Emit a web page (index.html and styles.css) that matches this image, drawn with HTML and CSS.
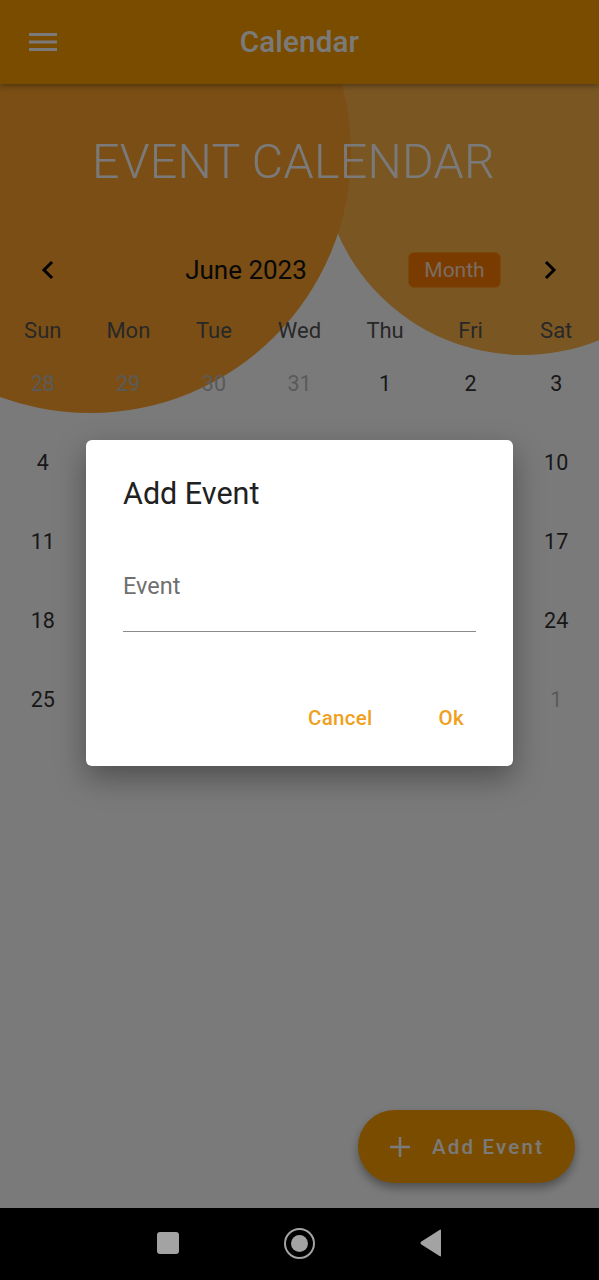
FILE: index.html
```html
<!DOCTYPE html>
<html>
<head>
<meta charset="utf-8">
<link rel="stylesheet" href="styles.css">
</head>
<body>
<div class="screen">
  <header class="appbar">
    <svg class="menu" width="28" height="20" viewBox="0 0 28 20"><rect x="0" y="1" width="28" height="3"/><rect x="0" y="8.5" width="28" height="3"/><rect x="0" y="16" width="28" height="3"/></svg>
    <div class="appbar-title">Calendar</div>
  </header>
  <main class="main">
    <div class="blob blob-right"></div>
    <div class="blob blob-left"></div>
    <h1 class="page-title">EVENT CALENDAR</h1>
    <section class="calendar">
      <div class="cal-head">
        <svg class="chev" width="24" height="24" viewBox="0 0 24 24"><path d="M15 5 L8 12 L15 19"/></svg>
        <div class="cal-month">June 2023</div>
        <div class="cal-format">Month</div>
        <svg class="chev chev-r" width="24" height="24" viewBox="0 0 24 24"><path d="M9 5 L16 12 L9 19"/></svg>
      </div>
      <div class="weekdays">
        <span>Sun</span><span>Mon</span><span>Tue</span><span>Wed</span><span>Thu</span><span>Fri</span><span>Sat</span>
      </div>
      <div class="days">
        <span class="out">28</span><span class="out">29</span><span class="out">30</span><span class="out">31</span><span>1</span><span>2</span><span>3</span>
        <span>4</span><span>5</span><span>6</span><span>7</span><span>8</span><span>9</span><span>10</span>
        <span>11</span><span>12</span><span>13</span><span>14</span><span>15</span><span>16</span><span>17</span>
        <span>18</span><span>19</span><span>20</span><span>21</span><span>22</span><span>23</span><span>24</span>
        <span>25</span><span>26</span><span>27</span><span>28</span><span>29</span><span>30</span><span class="out">1</span>
      </div>
    </section>
    <button class="fab">
      <svg width="24" height="24" viewBox="0 0 24 24"><path d="M12 2 V22 M2 12 H22"/></svg>
      <span>Add Event</span>
    </button>
    <div class="scrim"></div>
    <div class="dialog">
      <h2 class="dialog-title">Add Event</h2>
      <div class="field">
        <div class="field-label">Event</div>
      </div>
      <div class="dialog-actions">
        <button class="text-btn">Cancel</button>
        <button class="text-btn">Ok</button>
      </div>
    </div>
  </main>
  <div class="appbar-scrim"></div>
  <nav class="navbar">
    <span class="nav-square"></span>
    <span class="nav-home"><span class="nav-home-dot"></span></span>
    <svg class="nav-back" width="24" height="28" viewBox="0 0 24 28"><path d="M22 1.5 L22 26.5 Q22 28 20.5 27 L2 15.2 Q0.8 14 2 12.8 L20.5 1 Q22 0 22 1.5 Z"/></svg>
  </nav>
</div>
</body>
</html>
```
FILE: styles.css
```css
* { box-sizing: border-box; }
html, body { margin: 0; padding: 0; }
body {
  font-family: Roboto, "Liberation Sans", sans-serif;
  background: #000;
}
.screen {
  width: 599px;
  height: 1280px;
  display: flex;
  flex-direction: column;
  position: relative;
  overflow: hidden;
  background: #fff;
}
.appbar {
  height: 84px;
  flex: none;
  background: #ffa000;
  display: flex;
  align-items: center;
  justify-content: center;
  position: relative;
  z-index: 2;
  box-shadow: 0 2px 6px rgba(0,0,0,0.35);
}
.menu {
  position: absolute;
  left: 29px;
  top: 32px;
  fill: #fff;
}
.appbar-title {
  color: #fff;
  font-size: 29.5px;
  font-weight: 500;
  letter-spacing: 0.2px;
}
.main {
  flex: 1;
  position: relative;
  display: flex;
  flex-direction: column;
}
.blob {
  position: absolute;
  border-radius: 50%;
  z-index: 0;
}
.blob-left {
  width: 522px;
  height: 522px;
  left: -171px;
  top: -193px;
  background: #ffa42a;
}
.blob-right {
  width: 404px;
  height: 404px;
  left: 321px;
  top: -133px;
  background: #ffb449;
}
.page-title {
  position: relative;
  z-index: 1;
  margin: 50px 12px 0 0;
  text-align: center;
  color: #fff;
  font-size: 48.3px;
  line-height: 56px;
  font-weight: 300;
  letter-spacing: 0.3px;
}
.calendar {
  position: relative;
  z-index: 1;
  margin-top: 56px;
}
.cal-head {
  height: 48px;
  display: flex;
  align-items: center;
  padding-left: 36px;
}
.chev {
  flex: none;
  fill: none;
  stroke: #000;
  stroke-width: 3;
  stroke-linecap: square;
}
.chev-r { margin-left: 37px; }
.cal-month {
  width: 348px;
  padding-left: 24px;
  text-align: center;
  font-size: 26px;
  color: #111;
}
.cal-format {
  width: 93px;
  height: 36px;
  border-radius: 6px;
  background: #ff7c00;
  color: rgba(255,255,255,0.8);
  font-size: 21px;
  display: flex;
  align-items: center;
  justify-content: center;
  border: 1px solid #ff9a20;
}
.weekdays, .days {
  display: grid;
  grid-template-columns: repeat(7, 1fr);
  text-align: center;
}
.weekdays {
  margin-top: 25px;
  font-size: 22px;
  line-height: 24px;
  color: #555;
}
.days {
  grid-auto-rows: 79px;
  align-items: center;
  font-size: 21.5px;
  color: #333;
  margin-top: 0.5px;
}
.days .out { color: #bdbdbd; }
.fab {
  position: absolute;
  right: 24px;
  bottom: 25px;
  height: 73px;
  width: 217px;
  border: none;
  border-radius: 37px;
  background: #ffa000;
  color: #fff;
  display: flex;
  align-items: center;
  padding: 0 0 0 30px;
  gap: 20px;
  font-family: Roboto, "Liberation Sans", sans-serif;
  font-size: 20.5px;
  font-weight: 500;
  letter-spacing: 2.2px;
  box-shadow: 0 5px 10px rgba(0,0,0,0.35);
  z-index: 1;
}
.fab svg {
  fill: none;
  stroke: #fff;
  stroke-width: 2.6;
}
.scrim {
  position: absolute;
  inset: 0;
  background: rgba(0,0,0,0.52);
  z-index: 3;
}
.appbar-scrim {
  position: absolute;
  left: 0;
  top: 0;
  width: 599px;
  height: 84px;
  background: rgba(0,0,0,0.52);
  z-index: 3;
}
.dialog {
  position: absolute;
  left: 86px;
  top: 356px;
  width: 427px;
  height: 326px;
  background: #fff;
  border-radius: 6px;
  z-index: 4;
  padding: 36px 37px 28px 37px;
  display: flex;
  flex-direction: column;
  box-shadow: 0 12px 30px rgba(0,0,0,0.35);
}
.dialog-title {
  margin: 0;
  font-size: 30.5px;
  line-height: 36px;
  font-weight: 400;
  color: #212121;
}
.field {
  margin-top: 61px;
  height: 59px;
  border-bottom: 1.5px solid #8a8a8a;
}
.field-label {
  font-size: 23.5px;
  line-height: 26px;
  color: #6f6f6f;
}
.dialog-actions {
  margin-top: auto;
  display: flex;
  justify-content: flex-end;
  gap: 42px;
}
.text-btn {
  border: none;
  background: none;
  height: 40px;
  padding: 0 12px;
  font-family: Roboto, "Liberation Sans", sans-serif;
  font-size: 20.5px;
  font-weight: 500;
  letter-spacing: 0.3px;
  color: #f0a020;
}
.navbar {
  height: 72px;
  flex: none;
  background: #000;
  display: flex;
  align-items: center;
  justify-content: center;
  position: relative;
  z-index: 5;
}
.nav-square {
  position: absolute;
  left: 157px;
  top: 24px;
  width: 22px;
  height: 22px;
  border-radius: 3px;
  background: #a3a3a3;
}
.nav-home {
  position: absolute;
  left: 284px;
  top: 20px;
  width: 31px;
  height: 31px;
  border-radius: 50%;
  border: 2.5px solid #a3a3a3;
  display: flex;
  align-items: center;
  justify-content: center;
}
.nav-home-dot {
  width: 17px;
  height: 17px;
  border-radius: 50%;
  background: #a3a3a3;
}
.nav-back {
  position: absolute;
  left: 419px;
  top: 21px;
  fill: #a3a3a3;
}
```
